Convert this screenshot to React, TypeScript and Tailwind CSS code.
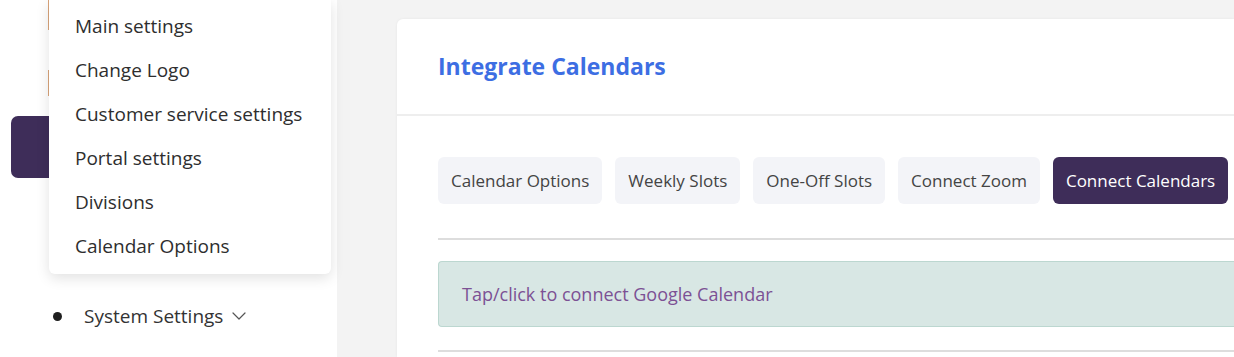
import { ChevronDown } from "lucide-react";

const MENU_ITEMS = [
  "Main settings",
  "Change Logo",
  "Customer service settings",
  "Portal settings",
  "Divisions",
  "Calendar Options",
];

const TABS = ["Calendar Options", "Weekly Slots", "One-Off Slots", "Connect Zoom", "Connect Calendars"];

export default function App() {
  return (
    <div
      className="flex h-[357px] w-[1234px] overflow-hidden bg-[#f3f3f3] text-[#333]"
      style={{ fontFamily: '"Open Sans", "Noto Sans", sans-serif' }}
    >
      {/* Sidebar */}
      <aside className="relative w-[337px] shrink-0 bg-white">
        {/* items peeking out from behind the menu */}
        <div className="absolute left-[48px] top-0 h-[30px] w-[2px] bg-[#d9a47a]" />
        <div className="absolute left-[48px] top-[70px] h-[26px] w-[2px] bg-[#d9a47a]" />
        <div className="absolute left-[11px] top-[116px] h-[62px] w-[60px] rounded-[7px] bg-[#3e2d59]" />

        {/* Dropdown menu */}
        <div className="absolute left-[49px] top-0 z-10 w-[282px] rounded-b-[6px] bg-white pb-[6px] pt-[4px] shadow-[0_4px_14px_rgba(0,0,0,0.12)]">
          <ul className="flex flex-col">
            {MENU_ITEMS.map((item) => (
              <li key={item} className="flex h-[44px] items-center pl-[26px] text-[19px] text-[#2e2e2e]">
                {item}
              </li>
            ))}
          </ul>
        </div>

        <div className="absolute left-[53px] top-[302px] flex items-center">
          <span className="h-[9px] w-[9px] rounded-full bg-[#1f1f1f]" />
          <span className="ml-[22px] text-[19px] text-[#333]">System Settings</span>
          <ChevronDown className="ml-[4px] h-[24px] w-[24px] text-[#555]" strokeWidth={1.2} />
        </div>
      </aside>

      {/* Main */}
      <main className="flex-1 pl-[60px] pt-[19px]">
        <div className="h-full rounded-tl-[6px] bg-white shadow-[0_0_3px_rgba(0,0,0,0.06)]">
          <div className="flex h-[97px] items-center border-b-2 border-[#eeeeee] pl-[41px]">
            <h1 className="text-[23px] font-bold text-[#3d6ee3]">Integrate Calendars</h1>
          </div>

          <div className="pl-[41px] pt-[41px]">
            <div className="flex gap-[13px]">
              {TABS.map((t) => {
                const active = t === "Connect Calendars";
                return (
                  <button
                    key={t}
                    className={`h-[47px] shrink-0 whitespace-nowrap rounded-[6px] px-[13px] text-[17px] ${
                      active ? "bg-[#3e2d59] text-white" : "bg-[#f3f4f8] text-[#444]"
                    }`}
                  >
                    {t}
                  </button>
                );
              })}
            </div>

            <div className="mt-[34px] h-[2px] bg-[#dddddd]" />

            <div className="mt-[21px] flex h-[66px] items-center rounded-l-[4px] border border-r-0 border-[#bcd7d0] bg-[#d8e7e4] pl-[23px]">
              <span className="text-[18px] text-[#7c5194]">Tap/click to connect Google Calendar</span>
            </div>

            <div className="mt-[23px] h-[2px] bg-[#dddddd]" />
          </div>
        </div>
      </main>
    </div>
  );
}
